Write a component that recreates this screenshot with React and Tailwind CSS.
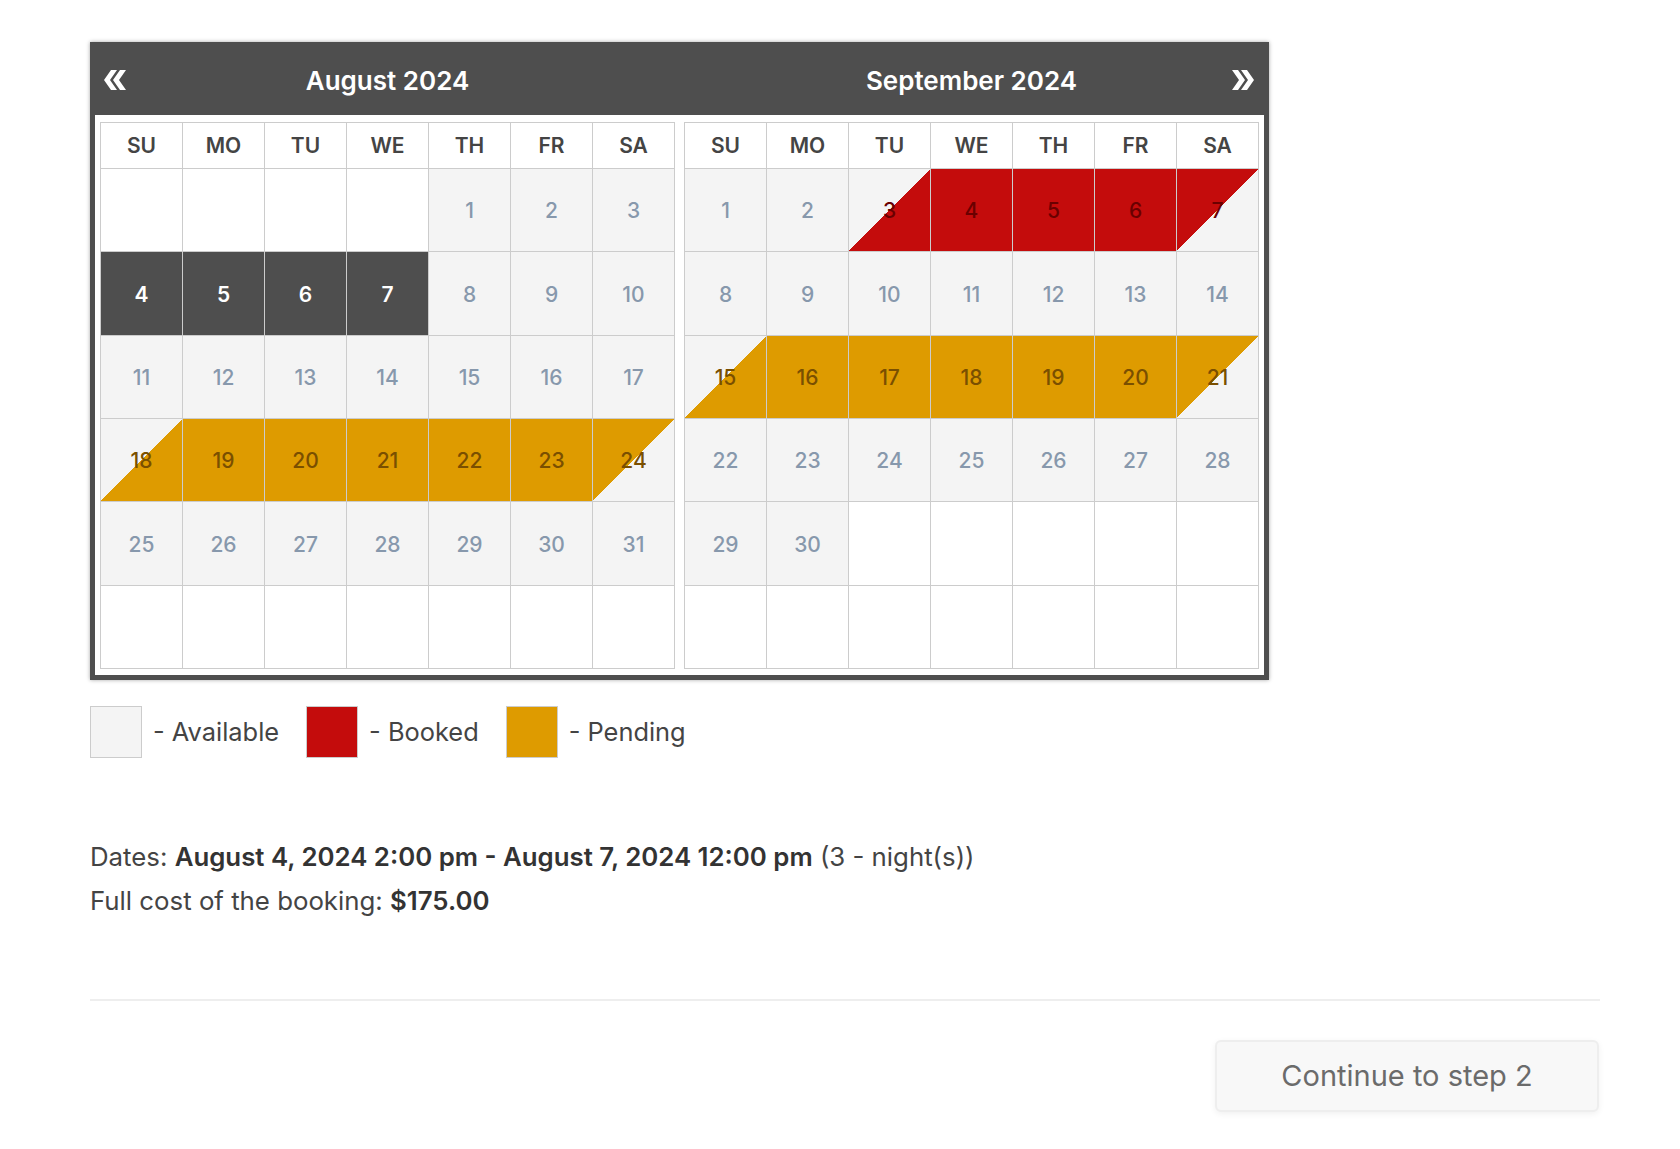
import React from "react";

const WEEKDAYS = ["SU", "MO", "TU", "WE", "TH", "FR", "SA"];

// cell kinds: e = empty, a = available, s = selected,
// b / bi / bo = booked (full, check-in, check-out), p / pi / po = pending
const august = [
  [null, "e"], [null, "e"], [null, "e"], [null, "e"], [1, "a"], [2, "a"], [3, "a"],
  [4, "s"], [5, "s"], [6, "s"], [7, "s"], [8, "a"], [9, "a"], [10, "a"],
  [11, "a"], [12, "a"], [13, "a"], [14, "a"], [15, "a"], [16, "a"], [17, "a"],
  [18, "pi"], [19, "p"], [20, "p"], [21, "p"], [22, "p"], [23, "p"], [24, "po"],
  [25, "a"], [26, "a"], [27, "a"], [28, "a"], [29, "a"], [30, "a"], [31, "a"],
  [null, "e"], [null, "e"], [null, "e"], [null, "e"], [null, "e"], [null, "e"], [null, "e"],
];

const september = [
  [1, "a"], [2, "a"], [3, "bi"], [4, "b"], [5, "b"], [6, "b"], [7, "bo"],
  [8, "a"], [9, "a"], [10, "a"], [11, "a"], [12, "a"], [13, "a"], [14, "a"],
  [15, "pi"], [16, "p"], [17, "p"], [18, "p"], [19, "p"], [20, "p"], [21, "po"],
  [22, "a"], [23, "a"], [24, "a"], [25, "a"], [26, "a"], [27, "a"], [28, "a"],
  [29, "a"], [30, "a"], [null, "e"], [null, "e"], [null, "e"], [null, "e"], [null, "e"],
  [null, "e"], [null, "e"], [null, "e"], [null, "e"], [null, "e"], [null, "e"], [null, "e"],
];

const cellStyles = {
  e: "bg-white",
  a: "bg-[#f4f4f4] text-[#8798ac] font-medium",
  s: "bg-[#4e4e4e] text-white font-semibold",
  b: "bg-[#c40c0c] text-[#6a0000] font-medium",
  bi: "bg-[linear-gradient(to_top_left,#c40c0c_50%,#f4f4f4_50%)] text-[#6a0000] font-medium",
  bo: "bg-[linear-gradient(to_bottom_right,#c40c0c_50%,#f4f4f4_50%)] text-[#6a0000] font-medium",
  p: "bg-[#de9b00] text-[#7a4f00] font-medium",
  pi: "bg-[linear-gradient(to_top_left,#de9b00_50%,#f4f4f4_50%)] text-[#7a4f00] font-medium",
  po: "bg-[linear-gradient(to_bottom_right,#de9b00_50%,#f4f4f4_50%)] text-[#7a4f00] font-medium",
};

const Chevrons = ({ dir }) => (
  <svg width="22" height="20" viewBox="0 0 22 20" className={dir === "right" ? "rotate-180" : ""}>
    <polygon points="0,10 7,0 13,0 6,10 13,20 7,20" fill="#fff" />
    <polygon points="9,10 16,0 22,0 15,10 22,20 16,20" fill="#fff" />
  </svg>
);

const MonthGrid = ({ days }) => (
  <div className="grid grid-cols-[repeat(7,81px)] grid-rows-[45px_repeat(6,82.34px)] gap-px p-px bg-[#cccccc]">
    {WEEKDAYS.map((d) => (
      <div key={d} className="bg-white flex items-center justify-center text-[21px] font-semibold text-[#444444]">
        {d}
      </div>
    ))}
    {days.map(([n, kind], i) => (
      <div key={i} className={`flex items-center justify-center pt-[2px] text-[21px] ${cellStyles[kind]}`}>
        {n}
      </div>
    ))}
  </div>
);

const LegendItem = ({ color, label }) => (
  <div className="flex items-center gap-[11px]">
    <div className={`w-[52px] h-[52px] border border-[#cccccc] ${color}`} />
    <span className="text-[25.4px] text-[#444444]">- {label}</span>
  </div>
);

export default function App() {
  return (
    <div className="min-h-screen bg-white font-['Inter',sans-serif] pt-[42px] px-[90px] pb-[38px]">
      <div className="w-[1510px]">
        {/* calendar */}
        <div className="w-[1179px] bg-[#4e4e4e] px-[5px] pb-[5px] shadow-[0_0_4px_rgba(0,0,0,0.35)]">
          <div className="h-[73px] flex gap-[9px] px-[5px] pt-[3px]">
            <div className="w-[575px] grid grid-cols-[40px_1fr_40px] items-center">
              <div className="pl-[4px] flex">
                <Chevrons dir="left" />
              </div>
              <div className="text-center text-[26px] font-semibold text-white">August 2024</div>
              <div />
            </div>
            <div className="w-[575px] grid grid-cols-[40px_1fr_40px] items-center">
              <div />
              <div className="text-center text-[26px] font-semibold text-white">September 2024</div>
              <div className="pr-[5px] flex justify-end">
                <Chevrons dir="right" />
              </div>
            </div>
          </div>
          <div className="bg-white flex gap-[9px] px-[5px] pt-[7px] pb-[6px]">
            <MonthGrid days={august} />
            <MonthGrid days={september} />
          </div>
        </div>

        {/* legend */}
        <div className="flex items-center gap-[27px] mt-[26px]">
          <LegendItem color="bg-[#f4f4f4]" label="Available" />
          <LegendItem color="bg-[#c40c0c]" label="Booked" />
          <LegendItem color="bg-[#de9b00]" label="Pending" />
        </div>

        {/* summary */}
        <div className="mt-[77px] text-[25.8px] leading-[44px] text-[#444444]">
          <div>
            Dates: <b className="font-semibold text-[#333333]">August 4, 2024 2:00 pm - August 7, 2024 12:00 pm</b> (3 - night(s))
          </div>
          <div>
            Full cost of the booking: <b className="font-semibold text-[#333333]">$175.00</b>
          </div>
        </div>

        <div className="mt-[76px] border-t-2 border-[#eeeeee]" />

        <div className="flex justify-end mt-[39px]">
          <button className="w-[384px] h-[72px] mr-px rounded-md border-2 border-[#eeeeee] bg-[#f8f8f8] text-[29px] text-[#6b6b6b] shadow-[0_2px_6px_rgba(0,0,0,0.06)]">
            Continue to step 2
          </button>
        </div>
      </div>
    </div>
  );
}
